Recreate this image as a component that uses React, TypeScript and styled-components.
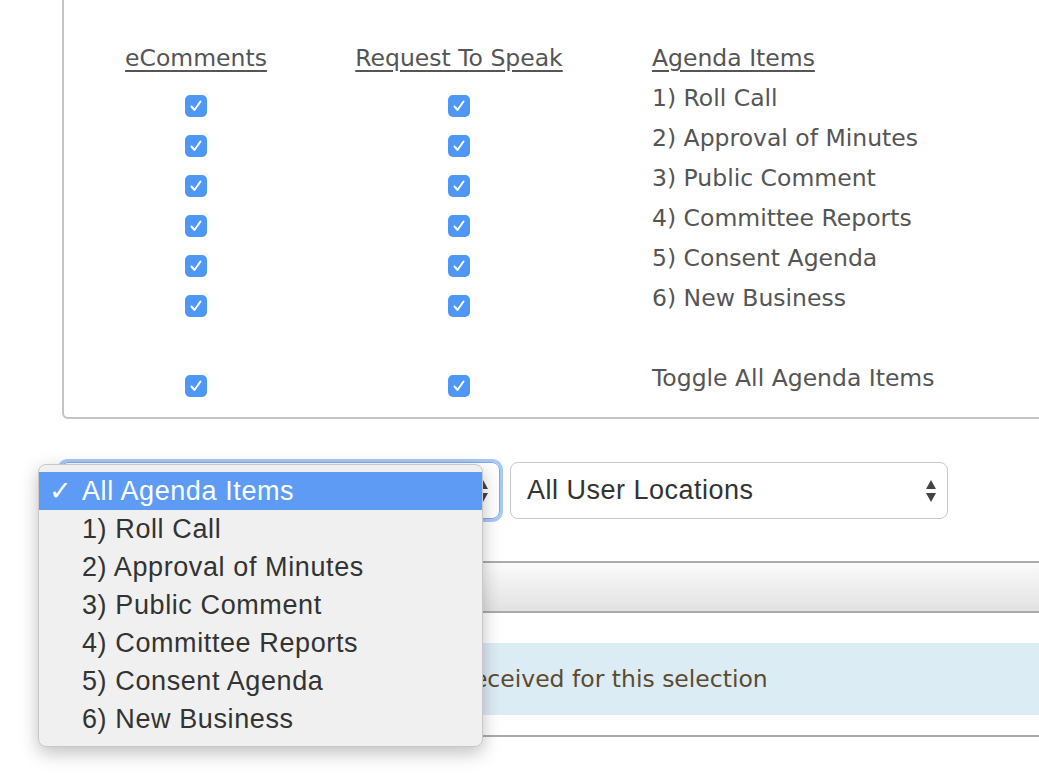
import React from 'react';
import styled, { createGlobalStyle } from 'styled-components';

const GlobalStyle = createGlobalStyle`
  html, body { margin: 0; padding: 0; background: #fff; overflow: hidden; }
  body { width: 1039px; height: 777px; font-family: "DejaVu Sans", Verdana, sans-serif; }
`;

const items = ['1) Roll Call', '2) Approval of Minutes', '3) Public Comment', '4) Committee Reports', '5) Consent Agenda', '6) New Business'];

const Page = styled.div`
  width: 1120px;
  padding-left: 60px;
`;

const Panel = styled.div`
  margin-left: 2px;
  border: 2px solid #c4c4c4;
  border-top: none;
  border-radius: 0 0 0 6px;
  padding: 38px 0 19px;
  display: grid;
  grid-template-columns: 264px 262px 1fr;
  grid-auto-rows: 40px;
  color: #555;
  font-size: 23.5px;
`;

const Head = styled.div<{ $left?: boolean }>`
  text-decoration: underline;
  text-underline-offset: 4px;
  line-height: 40px;
  white-space: nowrap;
  text-align: ${p => (p.$left ? 'left' : 'center')};
  padding-left: ${p => (p.$left ? '62px' : '0')};
`;

const Cell = styled.div`
  display: flex;
  justify-content: center;
  padding-top: 17px;
  box-sizing: border-box;
`;

const Label = styled.div`
  line-height: 40px;
  padding-left: 62px;
  white-space: nowrap;
`;

const Box = styled.span`
  width: 22px;
  height: 22px;
  border-radius: 5px;
  background: #4f97f5;
  display: flex;
  align-items: center;
  justify-content: center;
`;

const Check = () => (
  <Box>
    <svg width="14" height="14" viewBox="0 0 14 14">
      <path d="M2.5 7.5 L5.5 11 L11.5 2.5" fill="none" stroke="#fff" strokeWidth="2" strokeLinecap="round" strokeLinejoin="round" />
    </svg>
  </Box>
);

const SelectRow = styled.div`
  display: flex;
  gap: 10px;
  margin-top: 43px;
  position: relative;
`;

const Select = styled.div<{ $focus?: boolean }>`
  width: 440px;
  height: 57px;
  box-sizing: border-box;
  border: 1px solid ${p => (p.$focus ? '#7aaaf0' : '#c8c8c8')};
  box-shadow: ${p => (p.$focus ? '0 0 0 3px #a9c8f5' : 'none')};
  border-radius: 8px;
  display: flex;
  align-items: center;
  justify-content: space-between;
  padding: 0 10px 0 16px;
  font-family: "Liberation Sans", Arial, sans-serif;
  font-size: 27px;
  letter-spacing: 0.5px;
  color: #333;
  &:nth-child(2) { width: 438px; }
`;

const Arrows = () => (
  <svg width="12" height="26" viewBox="0 0 12 26">
    <path d="M6 2 L11 11 L1 11 Z M6 24 L11 15 L1 15 Z" fill="#444" />
  </svg>
);

const Popup = styled.div`
  position: absolute;
  left: -22px;
  top: 2px;
  width: 443px;
  padding: 7px 0 8px;
  background: #f0f0f0;
  border: 1px solid #c8c8c8;
  border-radius: 8px;
  box-shadow: 0 6px 18px rgba(0, 0, 0, 0.25);
  font-family: "Liberation Sans", Arial, sans-serif;
  font-size: 27px;
  letter-spacing: 0.6px;
  color: #333;
  z-index: 2;
`;

const Option = styled.div<{ $active?: boolean }>`
  height: 38px;
  line-height: 38px;
  padding-left: 43px;
  position: relative;
  white-space: nowrap;
  background: ${p => (p.$active ? '#5e9bf5' : 'transparent')};
  color: ${p => (p.$active ? '#fff' : '#333')};
`;

const Tick = styled.span`
  position: absolute;
  left: 10px;
`;

const Bar = styled.div`
  margin-top: 42px;
  height: 48px;
  border-top: 2px solid #aaa;
  border-bottom: 2px solid #aaa;
  background: linear-gradient(#fafafa, #e2e2e2);
`;

const Alert = styled.div`
  margin-top: 30px;
  height: 72px;
  background: #dcecf5;
  color: #5c4a30;
  font-size: 23.5px;
  display: flex;
  align-items: center;
  padding-left: 215px;
`;

const Rule = styled.div`
  margin-top: 20px;
  border-top: 2px solid #aaa;
`;

export default function App() {
  return (
    <>
      <GlobalStyle />
      <Page>
        <Panel>
          <Head>eComments</Head>
          <Head>Request To Speak</Head>
          <Head $left>Agenda Items</Head>
          {items.map(it => (
            <React.Fragment key={it}>
              <Cell><Check /></Cell>
              <Cell><Check /></Cell>
              <Label>{it}</Label>
            </React.Fragment>
          ))}
          <div /><div /><div />
          <Cell><Check /></Cell>
          <Cell><Check /></Cell>
          <Label>Toggle All Agenda Items</Label>
        </Panel>
        <SelectRow>
          <Select $focus>All Agenda Items<Arrows /></Select>
          <Select>All User Locations<Arrows /></Select>
          <Popup>
            <Option $active><Tick>✓</Tick>All Agenda Items</Option>
            {items.map(it => <Option key={it}>{it}</Option>)}
          </Popup>
        </SelectRow>
        <Bar />
        <Alert>No eComments received for this selection</Alert>
        <Rule />
      </Page>
    </>
  );
}
